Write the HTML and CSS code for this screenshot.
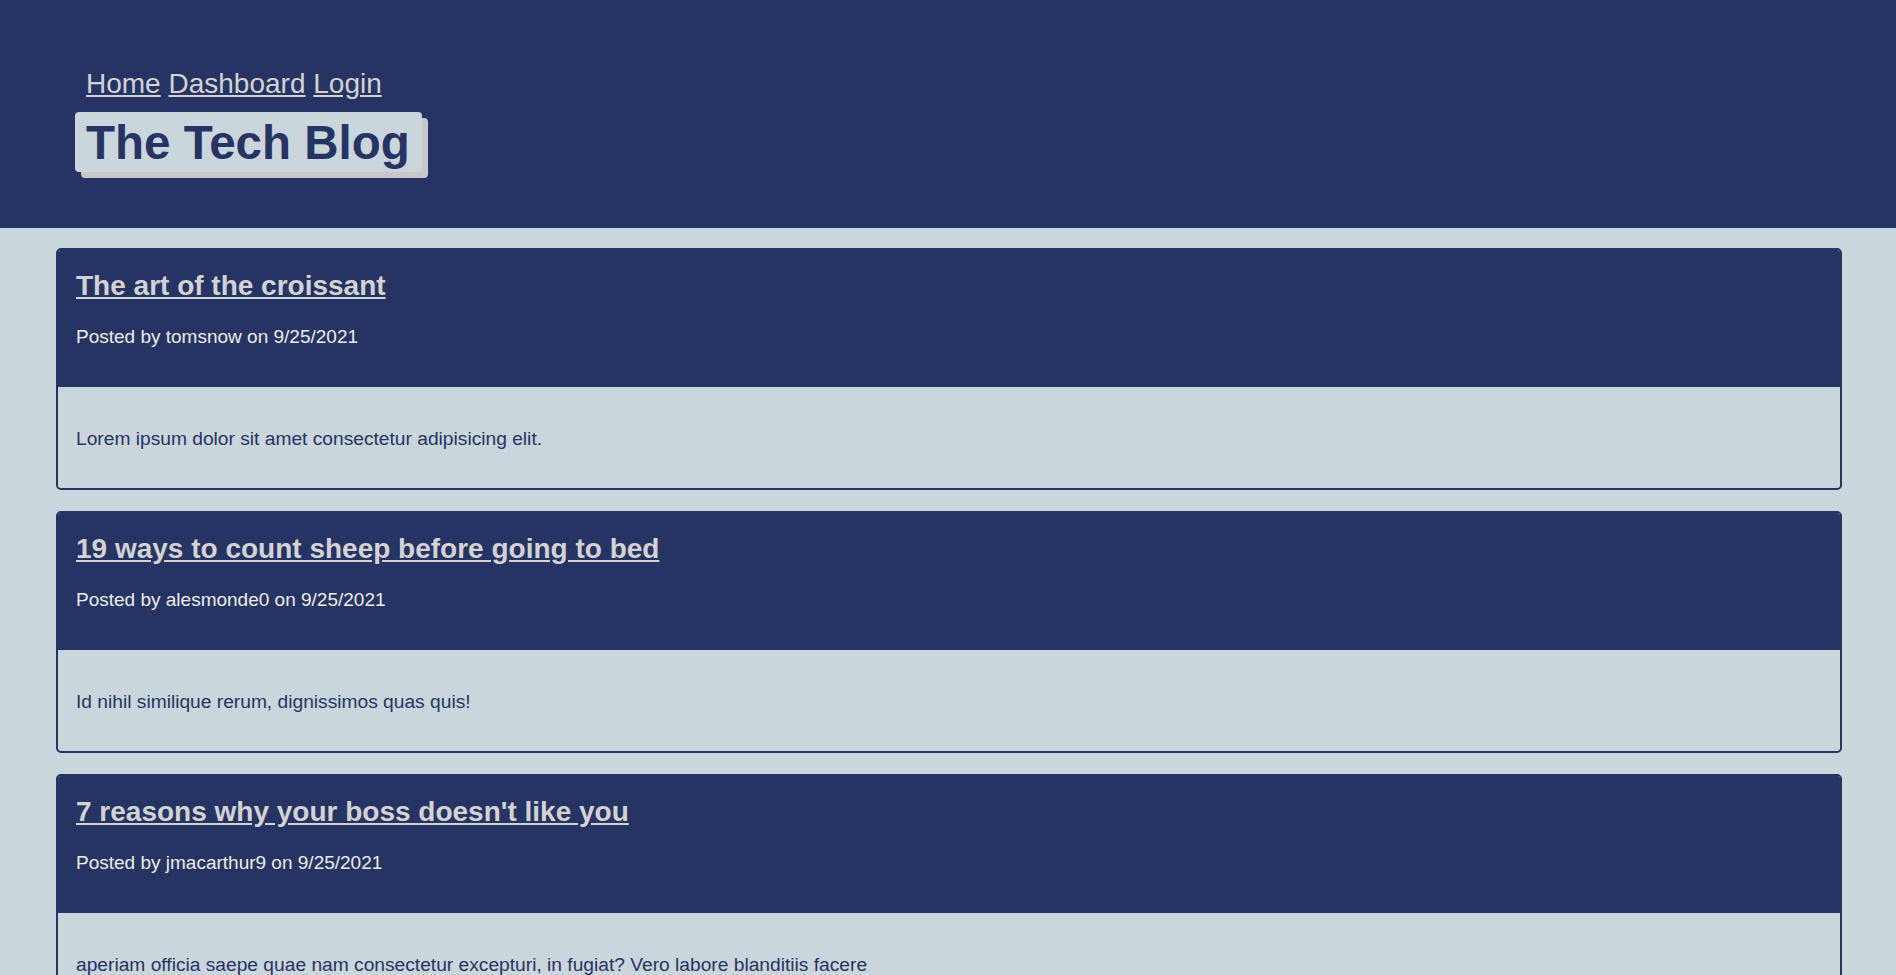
FILE: index.html
```html
<!DOCTYPE html>
<html lang="en">
<head>
<meta charset="utf-8">
<title>The Tech Blog</title>
<link rel="stylesheet" href="styles.css">
</head>
<body>
<header class="site-header">
  <nav class="nav">
    <a href="#">Home</a>
    <a href="#">Dashboard</a>
    <a href="#">Login</a>
  </nav>
  <div class="brand-wrap">
    <h1 class="brand">The Tech Blog</h1>
  </div>
</header>
<main class="posts">
  <article class="post">
    <div class="post-head">
      <h2 class="post-title"><a href="#">The art of the croissant</a></h2>
      <p class="post-meta">Posted by tomsnow on 9/25/2021</p>
    </div>
    <div class="post-body">
      <p>Lorem ipsum dolor sit amet consectetur adipisicing elit.</p>
    </div>
  </article>
  <article class="post">
    <div class="post-head">
      <h2 class="post-title"><a href="#">19 ways to count sheep before going to bed</a></h2>
      <p class="post-meta">Posted by alesmonde0 on 9/25/2021</p>
    </div>
    <div class="post-body">
      <p>Id nihil similique rerum, dignissimos quas quis!</p>
    </div>
  </article>
  <article class="post">
    <div class="post-head">
      <h2 class="post-title"><a href="#">7 reasons why your boss doesn't like you</a></h2>
      <p class="post-meta">Posted by jmacarthur9 on 9/25/2021</p>
    </div>
    <div class="post-body">
      <p>aperiam officia saepe quae nam consectetur excepturi, in fugiat? Vero labore blanditiis facere</p>
    </div>
  </article>
</main>
</body>
</html>
```

FILE: styles.css
```css
html, body {
  margin: 0;
  padding: 0;
}

body {
  background: #cbd5dc;
  font-family: "Liberation Sans", Arial, Helvetica, sans-serif;
  color: #263463;
}

.site-header {
  background: #263463;
  padding: 68px 0 56px 75px;
}

.nav {
  padding-left: 11px;
  font-size: 28px;
  line-height: normal;
}

.nav a {
  color: #d3d3d3;
  text-decoration: underline;
}

.brand-wrap {
  display: flex;
  flex-direction: column;
  align-items: flex-start;
  margin-top: 12px;
}

.brand {
  margin: 0;
  font-size: 47.5px;
  font-weight: bold;
  line-height: normal;
  background: #cbd5dc;
  color: #263463;
  padding: 3px 12px 2px 11px;
  border-radius: 4px;
  box-shadow: 6px 6px 0 #c8c8c8;
}

.posts {
  padding: 20px 54px 20px 56px;
}

.post {
  border: 2px solid #263463;
  border-radius: 5px;
  overflow: hidden;
  margin-bottom: 21px;
}

.post-head {
  background: #263463;
  padding: 20px 18px 39px;
}

.post-title {
  margin: 0;
  font-size: 28px;
  font-weight: bold;
  line-height: normal;
}

.post-title a {
  color: #d3d3d3;
  text-decoration: underline;
}

.post-meta {
  margin: 24px 0 0;
  font-size: 19px;
  line-height: normal;
  color: #ececec;
}

.post-body {
  padding: 41px 18px 38px;
}

.post-body p {
  margin: 0;
  font-size: 19.2px;
  line-height: normal;
  color: #263463;
}
```
